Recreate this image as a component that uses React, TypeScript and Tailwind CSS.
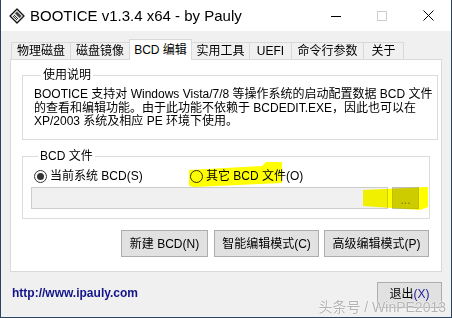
import React from 'react';

const tabs = [
  { label: '物理磁盘', w: 'w-[60px]' },
  { label: '磁盘镜像', w: 'w-[60px]' },
  { label: 'BCD 编辑', w: 'w-[63px]', active: true },
  { label: '实用工具', w: 'w-[59px]' },
  { label: 'UEFI', w: 'w-[43px]' },
  { label: '命令行参数', w: 'w-[73px]' },
  { label: '关于', w: 'w-[41px]' },
];

// tilted floppy icon in the caption
const AppIcon = () => (
  <svg width="16" height="16" viewBox="0 0 16 16">
    <path d="M8 1 L15 8 L8 15 L1 8 Z" fill="#e6e6e6" stroke="#111" strokeWidth="1.3" strokeLinejoin="round" />
    <path d="M8 3.5 L12.5 8 L10.5 10 L6 5.5 Z" fill="#444" />
    <path d="M4 8 L8 12 M5 7 L9 11" stroke="#333" strokeWidth="1" />
  </svg>
);

const Radio = ({ checked }: { checked?: boolean }) => (
  <span className="w-[13px] h-[13px] rounded-full border border-[#333] bg-white flex items-center justify-center shrink-0">
    {checked && <span className="w-[7px] h-[7px] rounded-full bg-[#333]" />}
  </span>
);

function App() {
  return (
    <div className="relative w-[452px] h-[318px] flex flex-col border-x border-b border-[#2a4561] bg-[#f0f0f0] overflow-hidden text-[12px] text-black font-['Liberation_Sans','Noto_Sans_CJK_SC',sans-serif]">
      {/* Caption */}
      <div className="h-[31px] bg-white flex items-center shrink-0">
        <div className="pl-[8px] pr-[5px] flex items-center">
          <AppIcon />
        </div>
        <span className="text-[15px] pt-[1px] flex-1">BOOTICE v1.3.4 x64 - by Pauly</span>
        <div className="w-[46px] h-full flex items-center justify-center">
          <svg width="10" height="10" viewBox="0 0 10 10"><path d="M0 5.5 H10" stroke="#000" strokeWidth="1" /></svg>
        </div>
        <div className="w-[46px] h-full flex items-center justify-center">
          <svg width="10" height="10" viewBox="0 0 10 10"><rect x="0.5" y="0.5" width="9" height="9" fill="none" stroke="#cccccc" strokeWidth="1" /></svg>
        </div>
        <div className="w-[46px] h-full flex items-center justify-center">
          <svg width="11" height="11" viewBox="0 0 11 11"><path d="M0.5 0.5 L10.5 10.5 M10.5 0.5 L0.5 10.5" stroke="#000" strokeWidth="1" /></svg>
        </div>
      </div>

      {/* Tabs */}
      <div className="mt-[8px] ml-[10px] flex items-end h-[20px]">
        {tabs.map((t, i) => (
          <div
            key={t.label}
            className={`${t.w} ${i > 0 ? '-ml-px' : ''} flex items-center justify-center border-t border-x border-[#d9d9d9] whitespace-nowrap ${
              t.active ? 'h-[21px] -mb-px bg-white relative z-10' : 'h-[17px] bg-[#f0f0f0]'
            }`}
          >
            {t.label}
          </div>
        ))}
      </div>

      {/* Tab panel */}
      <div className="ml-[9px] w-[432px] h-[213px] bg-white border border-[#d9d9d9] flex flex-col pl-[11px] shrink-0">
        <fieldset className="mt-[7px] w-[408px] h-[73px] border border-[#dcdcdc] pl-[11px] pr-[4px]">
          <legend className="ml-[7px] px-[2px] leading-[16px]">使用说明</legend>
          <div className="pt-[5px] leading-[13.5px] whitespace-nowrap">
            BOOTICE 支持对 Windows Vista/7/8 等操作系统的启动配置数据 BCD 文件<br />
            的查看和编辑功能。由于此功能不依赖于 BCDEDIT.EXE，因此也可以在<br />
            XP/2003 系统及相应 PE 环境下使用。
          </div>
        </fieldset>

        <fieldset className="mt-[8px] w-[408px] h-[71px] border border-[#dcdcdc] pl-[8px]">
          <legend className="ml-[7px] px-[2px] leading-[16px]">BCD 文件</legend>
          <div className="mt-[4px] h-[16px] flex items-center">
            <div className="w-[159px] pl-[3px] flex items-center gap-[3px]">
              <Radio checked />
              <span>当前系统 BCD(S)</span>
            </div>
            <div className="flex items-center gap-[3px]">
              <Radio />
              <span>其它 BCD 文件(O)</span>
            </div>
          </div>
          <div className="mt-[3px] flex items-center">
            <div className="w-[357px] h-[22px] bg-[#f0f0f0] border border-[#cccccc]" />
            <div className="ml-[4px] w-[27px] h-[22px] bg-[#cccccc] border border-[#bfbfbf] flex items-center justify-center text-[#838383] leading-none pt-[3px]">
              ...
            </div>
          </div>
        </fieldset>

        <div className="mt-[11px] flex justify-end pr-[12px]">
          <button className="w-[87px] h-[27px] bg-[#e1e1e1] border border-[#adadad] mr-[6px]">新建 BCD(N)</button>
          <button className="w-[105px] h-[27px] bg-[#e1e1e1] border border-[#adadad] mr-[5px]">智能编辑模式(C)</button>
          <button className="w-[105px] h-[27px] bg-[#e1e1e1] border border-[#adadad]">高级编辑模式(P)</button>
        </div>
      </div>

      {/* Footer */}
      <div className="mt-[10px] flex justify-between pl-[11px] pr-[9px]">
        <span className="mt-[3px] leading-[16px] font-bold text-[#14148a] font-['Liberation_Sans',sans-serif]">http://www.ipauly.com</span>
        <button className="w-[65px] h-[26px] bg-[#e1e1e1] border border-[#adadad] leading-[16px] pb-[2px]">
          退出<span className="text-[#1a1a9a]">(X)</span>
        </button>
      </div>

      {/* watermark */}
      <span className="absolute right-[5px] bottom-[3px] text-[14px] leading-[14px] text-[#b4b4b4] [text-shadow:0_0_2px_#fff,0_0_1px_#fff] whitespace-nowrap">
        头条号 / WinPE2013
      </span>

      {/* highlighter marks */}
      <svg className="absolute left-[-1px] top-0 pointer-events-none mix-blend-multiply" width="452" height="318" viewBox="0 0 452 318">
        <rect x="134" y="41" width="50" height="15" fill="#ffff00" />
        <polygon points="189,170 262,166 266,162 282,162 282,183 195,187 189,186" fill="#ffff00" />
        <polygon points="363,190 428,187 428,207 420,210 363,206" fill="#ffff00" />
      </svg>
    </div>
  );
}

export default App;
